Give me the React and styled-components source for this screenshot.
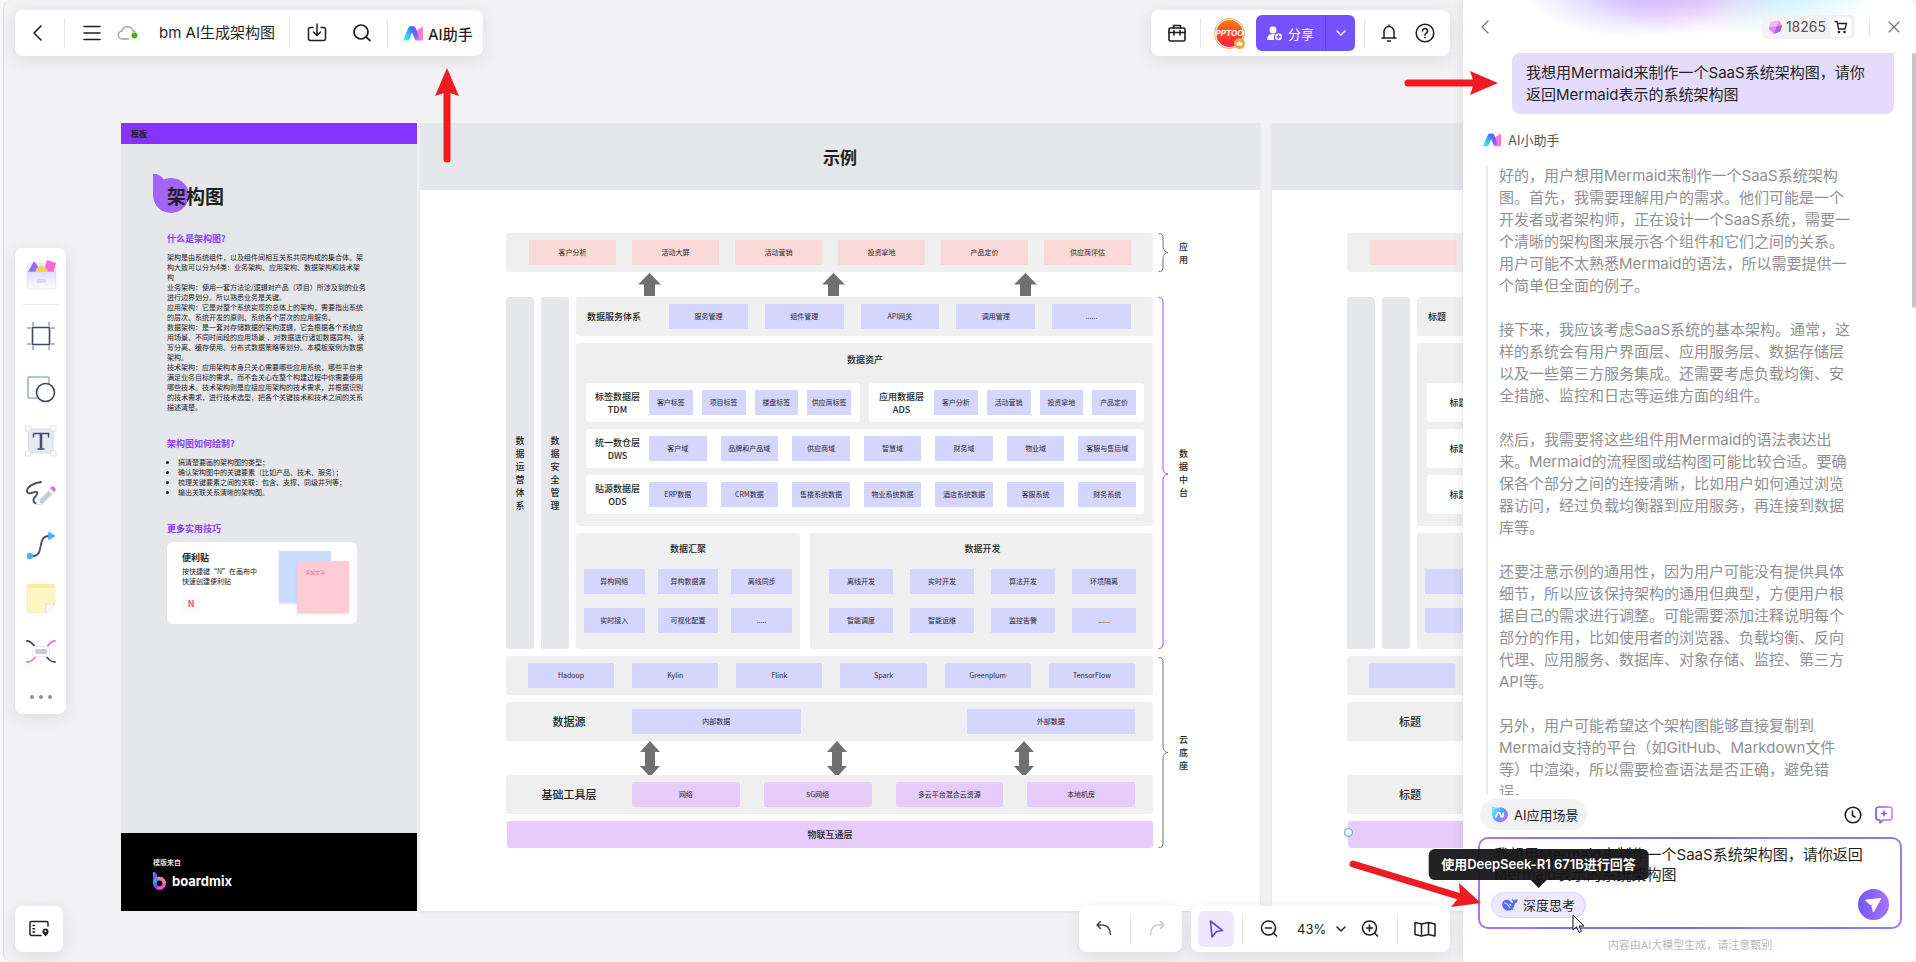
/* eslint-disable react/prop-types */
import { useState } from "react";
import styled, { createGlobalStyle, css } from "styled-components";
import { X } from "lucide-react";

const GlobalStyle = createGlobalStyle`
  * {
    box-sizing: border-box;
  }

  body {
    margin: 0;
    overflow: hidden;
    background: #f8f8f9;
    color: #1f1f21;
    font-family: Inter, "Noto Sans CJK SC", sans-serif;
    font-size: 15px;
  }

  button {
    padding: 0;
    border: none;
    background: none;
    color: inherit;
    font: inherit;
    cursor: pointer;
  }

  button svg {
    display: block;
    flex: none;
  }

  h1, h2, h3, p, ul {
    margin: 0;
    padding: 0;
  }
`;

/* ---------- page ---------- */

const Page = styled.div`
  position: relative;
  display: flex;
  height: 100vh;
  padding-left: 3px;
`;

const Workspace = styled.main`
  position: relative;
  flex: 1;
  min-width: 0;
  overflow: hidden;
  background: #f2f2f5;
  border-left: 1px solid #dededf;
  border-radius: 8px 0 0 8px;
`;

const Frames = styled.div`
  display: flex;
  width: max-content;
  padding: 123px 0 0 117px;
  font-family: "Noto Sans CJK SC", sans-serif;
`;

/* ---------- floating bars ---------- */

const Bar = styled.div`
  position: absolute;
  display: flex;
  align-items: center;
  height: 46px;
  background: #fff;
  border-radius: 8px;
  box-shadow: 0 4px 16px rgba(30, 30, 50, 0.1);
`;

const TopLeft = styled(Bar)`
  top: 10px;
  left: 11px;
  padding: 0 10px;
`;

const TopRight = styled(Bar)`
  top: 10px;
  right: 13px;
  padding: 0 13px 0 16px;
`;

const History = styled(Bar)`
  bottom: 10px;
  right: 281px;
  padding: 0 7px;
  gap: 8px;
`;

const ViewBar = styled(Bar)`
  bottom: 10px;
  right: 13px;
  padding: 0 7px;
`;

const MapBar = styled(Bar)`
  bottom: 10px;
  left: 11px;
  padding: 0 6px;
`;

const Rail = styled.nav`
  position: absolute;
  top: 50%;
  left: 11px;
  transform: translateY(-50%);
  display: flex;
  flex-direction: column;
  align-items: center;
  width: 51px;
  padding-top: 8px;
  background: #fff;
  border-radius: 8px;
  box-shadow: 0 4px 16px rgba(30, 30, 50, 0.1);
`;

const RailButton = styled.button`
  display: flex;
  align-items: center;
  justify-content: center;
  width: 36px;
  height: ${(props) => props.$h || 36}px;
  margin-top: ${(props) => props.$top || 0}px;
`;

const RailLine = styled.div`
  width: 35px;
  height: 1px;
  margin: 12px 0 13px;
  background: #e6e6ea;
`;

const IconButton = styled.button`
  display: flex;
  align-items: center;
  justify-content: center;
  width: ${(props) => props.$w || 36}px;
  height: 36px;
  border-radius: 6px;
  background: ${(props) => (props.$active ? "#ede8fe" : "none")};
`;

const Divider = styled.div`
  flex: none;
  width: 1px;
  height: ${(props) => props.$h || 30}px;
  margin: 0 ${(props) => props.$gap || 0}px;
  background: #e6e6ea;
`;

const FileName = styled.span`
  padding: 0 14px 0 11px;
  line-height: 20px;
  white-space: nowrap;
`;

const AiButton = styled.button`
  display: flex;
  align-items: center;
  gap: 5px;
  padding-left: 7px;
  font-weight: 500;
  white-space: nowrap;
`;

const Avatar = styled.div`
  position: relative;
  display: flex;
  align-items: center;
  justify-content: center;
  width: 31px;
  height: 31px;
  margin-right: 11px;
  border: 1px solid #f7a94a;
  border-radius: 50%;
  background: linear-gradient(#ff7a10, #ff1a4b) content-box;
  padding: 1px;
  color: #fff;
  font-size: 8px;
  font-style: italic;
  font-weight: 700;

  svg {
    position: absolute;
    right: -1px;
    bottom: -1px;
  }
`;

const Share = styled.div`
  display: flex;
  width: 99px;
  height: 36px;
  margin-right: 9px;
  background: #7552ff;
  border-radius: 6px;
  color: #fff;
  font-size: 13px;

  button {
    display: flex;
    align-items: center;
    justify-content: center;
    gap: 6px;
    width: 69px;
  }

  button + button {
    width: 30px;
    border-left: 1px solid #6442f0;
  }
`;

const ZoomValue = styled.button`
  display: flex;
  align-items: center;
  justify-content: space-between;
  width: 49px;
  height: 36px;
  margin: 0 6px 0 10px;
  font-size: 13px;
`;

/* ---------- template frame ---------- */

const Template = styled.section`
  display: flex;
  flex-direction: column;
  width: 296px;
  height: 788px;
  margin-right: 3px;
  background: #e6e7eb;
`;

const TemplateTop = styled.header`
  height: 21px;
  padding-left: 10px;
  background: #8533ff;
  font-size: 8px;
  font-weight: 700;
  line-height: 21px;
`;

const TemplateBody = styled.div`
  flex: 1;
  padding: 30px 0 0 46px;
`;

const TitleRow = styled.div`
  display: grid;
  align-items: center;
  height: 39px;
  margin-left: -14px;

  > * {
    grid-area: 1 / 1;
  }

  h1 {
    padding: 4px 0 0 14px;
    font-size: 19px;
    font-weight: 700;
    line-height: 24px;
  }
`;

const Heading = styled.h2`
  margin: ${(props) => props.$top}px 0 ${(props) => props.$bottom}px;
  color: #8a3ffc;
  font-size: 9px;
  font-weight: 700;
  line-height: 12px;
`;

const Copy = styled.p`
  color: #222;
  font-size: 7px;
  line-height: 10px;
  white-space: pre;
`;

const Bullets = styled.ul`
  padding-left: 11px;
  font-size: 7px;
  line-height: 10px;
`;

const TipCard = styled.div`
  display: flex;
  justify-content: space-between;
  width: 190px;
  height: 82px;
  padding: 9px 8px 0 15px;
  background: #fff;
  border-radius: 6px;

  h3 {
    margin-bottom: 2px;
    font-size: 9px;
    font-weight: 700;
    line-height: 13px;
  }
`;

const KeyCap = styled.span`
  display: block;
  width: 18px;
  height: 18px;
  margin-top: 9px;
  background: #fafafb;
  border-radius: 3px;
  color: #f84f6e;
  font-size: 9px;
  font-weight: 700;
  line-height: 18px;
  text-align: center;
`;

const Notes = styled.div`
  display: grid;
  grid-template-columns: 18px 34px 18px;
  grid-template-rows: 10px 42px 10px;
`;

const Note = styled.div`
  grid-area: ${(props) => props.$area};
  padding: 7px 0 0 8px;
  background: ${(props) => props.$color};
  box-shadow: 0 1px 2px rgba(0, 0, 0, 0.12);
  color: #c9758a;
  font-size: 5px;
  line-height: 8px;
`;

const TemplateFooter = styled.footer`
  height: 78px;
  padding: 23px 0 0 32px;
  background: #000;
  color: #fff;
  font-size: 7px;
  font-weight: 500;
  line-height: 12px;
`;

const Brand = styled.div`
  display: flex;
  align-items: center;
  gap: 6px;
  margin-top: 4px;
  font-family: Inter, sans-serif;
  font-size: 13px;
  font-weight: 700;
  line-height: 18px;
`;

/* ---------- diagram frames ---------- */

const Sheet = styled.section`
  width: 840px;
  height: 788px;
  margin-right: 12px;
  background: #fff;
  box-shadow: 0 1px 2px rgba(0, 0, 0, 0.08);
`;

const SheetTop = styled.header`
  height: 67px;
  background: #e6e7eb;
  font-size: 17px;
  font-weight: 700;
  line-height: 67px;
  text-align: center;
`;

const Diagram = styled.div`
  display: flex;
  flex-direction: column;
  padding: 43px 0 0 ${(props) => props.$left}px;
  font-size: 9px;
  font-weight: 500;
  line-height: 13px;
`;

const Band = styled.div`
  display: grid;
  grid-template-columns: 647px 11px 9px;
  align-items: center;
  column-gap: 5px;
`;

const SideLabel = styled.span`
  width: 9px;
  margin-left: 5px;
  text-align: center;
  word-break: break-all;
`;

const Layer = styled.div`
  display: flex;
  align-items: center;
  height: 39px;
  padding: 0 ${(props) => props.$right || 22}px 0 ${(props) => props.$left || 0}px;
  background: ${(props) => props.$bg || "#efeff0"};
  border-radius: 3px;
`;

const LayerTitle = styled.span`
  flex: none;
  width: ${(props) => props.$w}px;
  padding-left: ${(props) => props.$pad || 0}px;
  font-size: ${(props) => (props.$big ? 11 : 9)}px;
  text-align: ${(props) => (props.$pad ? "left" : "center")};
  white-space: pre-line;
`;

const tones = { pink: "#f9dad8", blue: "#d6d5fe", purple: "#e7cbfa" };

const Cells = styled.div`
  display: grid;
  flex: 1;
  grid-template-columns: repeat(${(props) => props.$cols}, 1fr);
  gap: 14px ${(props) => props.$gap}px;
`;

const Cell = styled.div`
  height: 25px;
  background: ${(props) => tones[props.$tone]};
  border-radius: ${(props) => (props.$tone === "purple" ? 2 : 0)}px;
  color: #26262a;
  font-size: 7px;
  font-weight: 400;
  line-height: 25px;
  text-align: center;
  white-space: nowrap;
`;

const ArrowRow = styled.div`
  display: grid;
  grid-template-columns: ${(props) => props.$cols};
  align-items: center;
  height: ${(props) => props.$h}px;
  padding-left: ${(props) => props.$left}px;
  visibility: ${(props) => (props.$hidden ? "hidden" : "visible")};
`;

const Middle = styled.div`
  display: grid;
  grid-template-columns: 28px 28px 1fr;
  column-gap: 7px;
`;

const Pillar = styled.div`
  display: flex;
  align-items: center;
  padding: 0 9px;
  background: #e6e7eb;
  border-radius: 3px;
  text-align: center;
  word-break: break-all;
`;

const Stack = styled.div`
  display: flex;
  flex-direction: column;
  gap: 7px;
`;

const Group = styled.div`
  padding: ${(props) => props.$pad};
  background: #efeff0;
  border-radius: 3px;
`;

const GroupTitle = styled.div`
  height: 13px;
  margin-bottom: ${(props) => props.$bottom}px;
  text-align: center;
`;

const Split = styled.div`
  display: grid;
  grid-template-columns: ${(props) => props.$cols};
  column-gap: ${(props) => props.$gap}px;
`;

const BaseLayer = styled.div`
  height: 27px;
  margin-left: 1px;
  background: #e7cbfa;
  border-radius: 3px;
  line-height: 27px;
  text-align: center;
`;

const Handle = styled.i`
  position: absolute;
  top: 828px;
  left: 1340px;
  width: 9px;
  height: 9px;
  background: #fff;
  border: 1px solid #35a0ff;
  border-radius: 50%;
`;

/* ---------- AI panel ---------- */

const Panel = styled.aside`
  position: relative;
  z-index: 2;
  display: flex;
  flex-direction: column;
  flex: none;
  width: 453px;
  background:
    radial-gradient(110px 52px at 170px -14px, rgba(150, 130, 255, 0.55), transparent),
    radial-gradient(100px 46px at 225px -10px, rgba(240, 150, 240, 0.5), transparent),
    radial-gradient(110px 46px at 310px -10px, rgba(140, 225, 250, 0.5), transparent),
    #fff;
  border-radius: 0 8px 8px 0;
  box-shadow: -2px 0 10px rgba(30, 30, 50, 0.08);
`;

const PanelTop = styled.header`
  display: flex;
  align-items: center;
  height: 53px;
  padding: 0 12px 0 13px;
  color: #6d6d72;

  > button:first-child {
    margin-right: auto;
  }
`;

const Points = styled.div`
  display: flex;
  align-items: center;
  gap: 3px;
  height: 24px;
  padding: 0 4px 0 5px;
  background: #f2f2f5;
  border-radius: 5px;
  color: #555559;
  font-size: 14px;

  button {
    display: flex;
    align-items: center;
    justify-content: center;
    width: 20px;
    height: 20px;
    margin-left: 2px;
    background: #fff;
    border-radius: 4px;
    color: #1f1f21;
  }
`;

const Chat = styled.div`
  position: relative;
  flex: 1;
  min-height: 0;
  overflow: hidden;
  padding: 0 22px 0 20px;
  line-height: 22px;
`;

const Thumb = styled.div`
  position: absolute;
  top: 0;
  right: 0;
  width: 4px;
  height: 255px;
  background: #c6c6ca;
  border-radius: 2px;
`;

const Question = styled.p`
  width: 382px;
  margin-left: auto;
  padding: 9px 14px 8px;
  background: #e4dbfd;
  border-radius: 8px 0 8px 8px;
  white-space: pre-line;
`;

const Speaker = styled.div`
  display: flex;
  align-items: center;
  gap: 7px;
  height: 18px;
  margin: 17px 0 16px;
  color: #555559;
  font-size: 13px;
`;

const Thinking = styled.div`
  display: flex;
  flex-direction: column;
  gap: 22px;
  margin-left: 3px;
  padding-left: 11px;
  border-left: 2px solid #e8e8ea;
  color: #8f8f94;
  white-space: pre-line;
`;

const PanelBottom = styled.div`
  padding: 4px 14px 9px 15px;
`;

const Tools = styled.div`
  display: flex;
  align-items: center;
  gap: 13px;
  padding: 0 9px 0 2px;
  margin-bottom: 7px;

  > svg {
    flex: none;
  }
`;

const Scenes = styled.button`
  display: flex;
  align-items: center;
  gap: 6px;
  height: 31px;
  margin-right: auto;
  padding: 0 9px 0 11px;
  background: #f2f2f5;
  border-radius: 16px;
  font-size: 13px;
`;

const Composer = styled.div`
  padding: 6px 11px 7px;
  border: 2px solid transparent;
  border-radius: 10px;
  background:
    linear-gradient(#fff, #fff) padding-box,
    linear-gradient(100deg, #a777ee, #8a6cf0 30%, #6f6fe8 50%, #9a78f5 70%, #6c82ea 84%, #a777ee) border-box;
`;

const Prompt = styled.textarea`
  display: block;
  width: 100%;
  height: 40px;
  margin-bottom: 4px;
  padding: 0 3px;
  border: none;
  outline: none;
  overflow: hidden;
  resize: none;
  background: none;
  color: inherit;
  font: inherit;
  line-height: 20px;
`;

const Actions = styled.div`
  display: flex;
  align-items: center;
  justify-content: space-between;
  height: 31px;
`;

const DeepWrap = styled.div`
  position: relative;
`;

const DeepThink = styled.button`
  display: flex;
  align-items: center;
  gap: 5px;
  height: 26px;
  padding: 0 10px;
  background: #ede8fe;
  border: 1px solid #dcd3f5;
  border-radius: 13px;
  font-size: 13px;
`;

const Tooltip = styled.div`
  position: absolute;
  bottom: 38px;
  left: 50%;
  transform: translateX(-50%);
  height: 31px;
  padding: 0 13px;
  background: rgba(22, 22, 25, 0.95);
  border-radius: 6px;
  color: #fff;
  font-size: 13px;
  font-weight: 600;
  line-height: 31px;
  white-space: nowrap;

  &::after {
    content: "";
    position: absolute;
    top: 31px;
    left: 50%;
    margin-left: -8px;
    border: 8px solid transparent;
    border-top-color: #1b1b1e;
    border-bottom: none;
  }
`;

const Footnote = styled.p`
  margin-top: 8px;
  color: #b9b9bd;
  font-size: 11px;
  line-height: 16px;
  text-align: center;
`;

/* ---------- pointers drawn over the page ---------- */

const overlay = css`
  position: absolute;
  z-index: 3;
  pointer-events: none;
`;

const ArrowUp = styled.svg`
  ${overlay}
  top: 68px;
  left: 435px;
`;

const ArrowRight = styled.svg`
  ${overlay}
  top: 71px;
  right: 418px;
`;

const ArrowDown = styled.svg`
  ${overlay}
  right: 434px;
  bottom: 52px;
`;

const Mouse = styled.svg`
  ${overlay}
  right: 331px;
  bottom: 28px;
`;

/* ---------- icons ---------- */

function Svg({ size = 20, w, h, sw = 1.6, color = "#1f1f21", children }) {
  return (
    <svg
      width={w || size}
      height={h || size}
      viewBox={`0 0 ${w || size} ${h || size}`}
      fill="none"
      stroke={color}
      strokeWidth={sw}
      strokeLinecap="round"
      strokeLinejoin="round"
      aria-hidden="true"
    >
      {children}
    </svg>
  );
}

function AiLogo({ id, w = 20, h = 15 }) {
  return (
    <svg width={w} height={h} viewBox="0 0 20 15" aria-hidden="true">
      <defs>
        <linearGradient id={`${id}a`} x1="0" y1="1" x2="0.7" y2="0">
          <stop offset="0.1" stopColor="#37f5dc" />
          <stop offset="0.6" stopColor="#34b0ff" />
          <stop offset="1" stopColor="#3f6bff" />
        </linearGradient>
        <linearGradient id={`${id}b`} x1="0" y1="0" x2="1" y2="1">
          <stop offset="0" stopColor="#3c6dff" />
          <stop offset="0.6" stopColor="#8a55ff" />
          <stop offset="1" stopColor="#c79bff" />
        </linearGradient>
      </defs>
      <path d="M20 0.5 12.5 5 16 14.5h4z" fill="#ff7ccb" />
      <path d="M6.5 0.5H12L17.5 14.5H12.5z" fill={`url(#${id}b)`} />
      <path d="M0 14.5 5.2 2.2C5.7 1 6.6 0.5 7.6 0.5H11L7.2 11.5C6.5 13.6 5.6 14.5 3.8 14.5z" fill={`url(#${id}a)`} />
    </svg>
  );
}

function Chevron() {
  return (
    <Svg w={10} h={10} color="currentColor" sw={1.5}>
      <path d="M1 3l4 4 4-4" />
    </Svg>
  );
}

function UpArrow() {
  return (
    <svg width="23" height="23" viewBox="0 0 23 23" aria-hidden="true">
      <path d="M11.5 0 23 11.5H17V23H6V11.5H0z" fill="#6f7072" />
    </svg>
  );
}

function TwoWayArrow() {
  return (
    <svg width="20" height="36" viewBox="0 0 20 36" aria-hidden="true">
      <path d="M10 0 20 11H15V25H20L10 36 0 25H5V11H0z" fill="#6f7072" />
    </svg>
  );
}

function Brace({ h, mid = h / 2, color = "#6f7072" }) {
  return (
    <Svg w={11} h={h} color={color} sw={1}>
      <path
        d={`M1 .5C4 .5 5 2 5 5V${mid - 6}C5 ${mid - 3} 7 ${mid} 10 ${mid}C7 ${mid} 5 ${mid + 3} 5 ${mid + 6}V${h - 5}C5 ${h - 2} 4 ${h - 0.5} 1 ${h - 0.5}`}
      />
    </Svg>
  );
}

/* ---------- content ---------- */

const intro = `架构是由系统组件，以及组件间相互关系共同构成的集合体。架
构大致可以分为4类：业务架构、应用架构、数据架构和技术架
构
业务架构：使用一套方法论/逻辑对产品（项目）所涉及到的业务
进行边界划分。所以熟悉业务是关键。
应用架构：它是对整个系统实现的总体上的架构，需要指出系统
的层次、系统开发的原则、系统各个层次的应用服务。
数据架构：是一套对存储数据的架构逻辑，它会根据各个系统应
用场景、不同时间段的应用场景 ，对数据进行诸如数据异构、读
写分离、缓存使用、分布式数据策略等划分。本模板案例为数据
架构。
技术架构：应用架构本身只关心需要哪些应用系统，哪些平台来
满足业务目标的需求，而不会关心在整个构建过程中你需要使用
哪些技术。技术架构则是应接应用架构的技术需求，并根据识别
的技术需求，进行技术选型，把各个关键技术和技术之间的关系
描述清楚。`;

const steps = [
  "搞清楚要画的架构图的类型；",
  "确认架构图中的关键要素（比如产品、技术、服务）；",
  "梳理关键要素之间的关联：包含、支撑、同级并列等；",
  "输出关联关系清晰的架构图。",
];

const thoughts = [
  `好的，用户想用Mermaid来制作一个SaaS系统架构
图。首先，我需要理解用户的需求。他们可能是一个
开发者或者架构师，正在设计一个SaaS系统，需要一
个清晰的架构图来展示各个组件和它们之间的关系。
用户可能不太熟悉Mermaid的语法，所以需要提供一
个简单但全面的例子。`,
  `接下来，我应该考虑SaaS系统的基本架构。通常，这
样的系统会有用户界面层、应用服务层、数据存储层
以及一些第三方服务集成。还需要考虑负载均衡、安
全措施、监控和日志等运维方面的组件。`,
  `然后，我需要将这些组件用Mermaid的语法表达出
来。Mermaid的流程图或结构图可能比较合适。要确
保各个部分之间的连接清晰，比如用户如何通过浏览
器访问，经过负载均衡器到应用服务，再连接到数据
库等。`,
  `还要注意示例的通用性，因为用户可能没有提供具体
细节，所以应该保持架构的通用但典型，方便用户根
据自己的需求进行调整。可能需要添加注释说明每个
部分的作用，比如使用者的浏览器、负载均衡、反向
代理、应用服务、数据库、对象存储、监控、第三方
API等。`,
  `另外，用户可能希望这个架构图能够直接复制到
Mermaid支持的平台（如GitHub、Markdown文件
等）中渲染，所以需要检查语法是否正确，避免错
误。`,
];

/* ---------- frames ---------- */

function TemplateFrame() {
  return (
    <Template>
      <TemplateTop>模板</TemplateTop>
      <TemplateBody>
        <TitleRow>
          <svg width="36" height="39" viewBox="0 0 36 39" aria-hidden="true">
            <path d="M0 0C5 0 9 2 10.500 5.500A18 17.500 0 1 1 0 21z" fill="#a264f5" />
          </svg>
          <h1>架构图</h1>
        </TitleRow>
        <Heading $top={20} $bottom={7}>什么是架构图?</Heading>
        <Copy>{intro}</Copy>
        <Heading $top={26} $bottom={7}>架构图如何绘制?</Heading>
        <Bullets>
          {steps.map((step) => (
            <li key={step}>{step}</li>
          ))}
        </Bullets>
        <Heading $top={26} $bottom={7}>更多实用技巧</Heading>
        <TipCard>
          <div>
            <h3>便利贴</h3>
            <Copy>{"按快捷键“N”在画布中\n快速创建便利贴"}</Copy>
            <KeyCap>N</KeyCap>
          </div>
          <Notes>
            <Note $area="1 / 1 / 3 / 3" $color="#cbdcff" />
            <Note $area="2 / 2 / 4 / 4" $color="#ffcbd5">添加文字</Note>
          </Notes>
        </TipCard>
      </TemplateBody>
      <TemplateFooter>
        模版来自
        <Brand>
          <svg width="13" height="18" viewBox="0 0 13 18" fill="none" aria-hidden="true">
            <defs>
              <linearGradient id="brand" x1="0" y1="0" x2="1" y2="1">
                <stop offset="0.1" stopColor="#1fb4ff" />
                <stop offset="0.45" stopColor="#6a45ff" />
                <stop offset="0.75" stopColor="#ff4fc8" />
              </linearGradient>
            </defs>
            <path d="M0 0C2.500 0 4 1.500 4 3.500V11.500H0z" fill="url(#brand)" />
            <circle cx="6.500" cy="11.300" r="4.700" stroke="url(#brand)" strokeWidth="3.600" />
            <path d="M5 6.700A4.700 4.700 0 0 1 11.200 11" stroke="#ff7d8e" strokeWidth="3.400" />
          </svg>
          boardmix
        </Brand>
      </TemplateFooter>
    </Template>
  );
}

function CellRow({ items, tone = "blue", gap, cols, blank }) {
  return (
    <Cells $cols={cols || items.length} $gap={gap}>
      {items.map((item) => (
        <Cell key={item} $tone={tone}>
          {!blank && item}
        </Cell>
      ))}
    </Cells>
  );
}

function DiagramFrame({ blank }) {
  const t = (text) => (blank ? "标题" : text);
  const own = (text) => (blank ? "" : text);

  return (
    <Sheet>
      <SheetTop>{own("示例")}</SheetTop>
      <Diagram $left={blank ? 75 : 86}>
        <Band>
          <Layer $left={23}>
            <CellRow
              blank={blank}
              tone="pink"
              gap={16}
              items={["客户分析", "活动大屏", "活动营销", "投资拿地", "产品定价", "供应商评估"]}
            />
          </Layer>
          <Brace h={39} />
          <SideLabel>{own("应用")}</SideLabel>
        </Band>

        <ArrowRow $h={25} $left={132} $hidden={blank} $cols="184px 192px 23px">
          <UpArrow />
          <UpArrow />
          <UpArrow />
        </ArrowRow>

        <Band>
          <Middle>
            <Pillar>{own("数据运营体系")}</Pillar>
            <Pillar>{own("数据安全管理")}</Pillar>
            <Stack>
              <Layer>
                <LayerTitle $w={93} $pad={11}>{t("数据服务体系")}</LayerTitle>
                <CellRow blank={blank} gap={17} items={["服务管理", "组件管理", "API网关", "调用管理", "......"]} />
              </Layer>
              <Group $pad="10px 9px 12px 10px">
                <GroupTitle $bottom={17}>{own("数据资产")}</GroupTitle>
                <Stack>
                  <Split $cols="274px 1fr" $gap={9}>
                    <Layer $bg="#fff" $right={9}>
                      <LayerTitle $w={63}>{t("标签数据层\nTDM")}</LayerTitle>
                      <CellRow blank={blank} gap={9} items={["客户标签", "项目标签", "楼盘标签", "供应商标签"]} />
                    </Layer>
                    <Layer $bg="#fff" $right={8}>
                      <LayerTitle $w={65}>{own("应用数据层\nADS")}</LayerTitle>
                      <CellRow blank={blank} gap={9} items={["客户分析", "活动营销", "投资拿地", "产品定价"]} />
                    </Layer>
                  </Split>
                  <Layer $bg="#fff" $right={8}>
                    <LayerTitle $w={63}>{t("统一数仓层\nDWS")}</LayerTitle>
                    <CellRow
                      blank={blank}
                      gap={14}
                      items={["客户域", "品牌和产品域", "供应商域", "智慧域", "财务域", "物业域", "客服与售后域"]}
                    />
                  </Layer>
                  <Layer $bg="#fff" $right={8}>
                    <LayerTitle $w={63}>{t("贴源数据层\nODS")}</LayerTitle>
                    <CellRow
                      blank={blank}
                      gap={14}
                      items={["ERP数据", "CRM数据", "售楼系统数据", "物业系统数据", "酒店系统数据", "客服系统", "财务系统"]}
                    />
                  </Layer>
                </Stack>
              </Group>
              <Split $cols="224px 1fr" $gap={10}>
                <Group $pad="9px 8px 16px">
                  <GroupTitle $bottom={14}>{own("数据汇聚")}</GroupTitle>
                  <CellRow
                    blank={blank}
                    cols={3}
                    gap={13}
                    items={["异构网络", "异构数据源", "离线同步", "实时接入", "可视化配置", "....."]}
                  />
                </Group>
                <Group $pad="9px 17px 16px 19px">
                  <GroupTitle $bottom={14}>{own("数据开发")}</GroupTitle>
                  <CellRow
                    blank={blank}
                    cols={4}
                    gap={17}
                    items={["离线开发", "实时开发", "算法开发", "环境隔离", "智能调度", "智能运维", "监控告警", "......"]}
                  />
                </Group>
              </Split>
            </Stack>
          </Middle>
          <Brace h={352} mid={177} color="#a24bf5" />
          <SideLabel>{own("数据中台")}</SideLabel>
        </Band>

        <ArrowRow $h={7} />

        <Band>
          <div>
            <Stack>
              <Layer $left={22} $right={18}>
                <CellRow
                  blank={blank}
                  gap={18}
                  items={["Hadoop", "Kylin", "Flink", "Spark", "Greenplum", "TensorFlow"]}
                />
              </Layer>
              <Layer $right={18}>
                <LayerTitle $big $w={126}>{t("数据源")}</LayerTitle>
                <CellRow blank={blank} gap={166} items={["内部数据", "外部数据"]} />
              </Layer>
            </Stack>
            <ArrowRow $h={34} $left={134} $hidden={blank} $cols="187px 187px 20px">
              <TwoWayArrow />
              <TwoWayArrow />
              <TwoWayArrow />
            </ArrowRow>
            <Stack>
              <Layer $right={18}>
                <LayerTitle $big $w={126}>{t("基础工具层")}</LayerTitle>
                <CellRow
                  blank={blank}
                  tone="purple"
                  gap={24}
                  items={["网络", "5G网络", "多云平台混合云资源", "本地机房"]}
                />
              </Layer>
              <BaseLayer>{own("物联互通层")}</BaseLayer>
            </Stack>
          </div>
          <Brace h={191} />
          <SideLabel>{own("云底座")}</SideLabel>
        </Band>
      </Diagram>
    </Sheet>
  );
}

/* ---------- bars ---------- */

function TopBars() {
  return (
    <>
      <TopLeft>
        <IconButton $w={26} aria-label="返回">
          <Svg color="#1f1f21">
            <path d="M13 3 6 10l7 7" />
          </Svg>
        </IconButton>
        <Divider $gap={13} />
        <IconButton $w={28} aria-label="菜单">
          <Svg w={18} h={18}>
            <path d="M1 2.500h16M1 9h16M1 15.500h16" />
          </Svg>
        </IconButton>
        <IconButton $w={42} aria-label="已保存到云端">
          <Svg w={22} h={20} color="#a3a3a8" sw={1.4}>
            <path d="M12.500 16H6.500A4 4 0 0 1 6 8a5.500 5.500 0 0 1 10.600-.500c1 .200 1.800.700 2.400 1.400" />
            <circle cx="18.500" cy="12.500" r="3" fill="#3cb015" stroke="none" />
          </Svg>
        </IconButton>
        <FileName>bm AI生成架构图</FileName>
        <Divider />
        <IconButton $w={55} aria-label="导出">
          <Svg sw={1.5}>
            <path d="M6 4.500H3.500a2 2 0 0 0-2 2v9a2 2 0 0 0 2 2h13a2 2 0 0 0 2-2v-9a2 2 0 0 0-2-2H14M10 1v11M6.500 9l3.500 3.500L13.500 9" />
          </Svg>
        </IconButton>
        <IconButton $w={34} aria-label="搜索">
          <Svg sw={1.7}>
            <circle cx="9" cy="9" r="7" />
            <path d="m14 14 4 3.500" />
          </Svg>
        </IconButton>
        <Divider $gap={8} />
        <AiButton>
          <AiLogo id="top" />
          AI助手
        </AiButton>
      </TopLeft>

      <TopRight>
        <IconButton $w={20} aria-label="工具箱">
          <Svg>
            <path d="M6.500 5V2.500h7V5M2 9.500h16M7 7.500V12M13 7.500V12" />
            <rect x="2" y="5" width="16" height="13" rx="1.500" />
          </Svg>
        </IconButton>
        <Divider $gap={13} />
        <Avatar>
          PPTOO
          <svg width="11" height="11" viewBox="0 0 11 11" aria-hidden="true">
            <circle cx="5.500" cy="5.500" r="5.500" fill="#f5a93c" />
            <path d="m2.500 4 1.500 1L5.500 3 7 5l1.500-1L8 7.500H3z" fill="#fff" />
          </svg>
        </Avatar>
        <Share>
          <button type="button">
            <Svg w={15} h={15} color="none">
              <circle cx="6" cy="4" r="3.500" fill="#fff" />
              <path d="M0 14c0-4 2-6 6-6 .900 0 1.500.100 2 .300A5 5 0 0 0 7.500 14z" fill="#fff" />
              <circle cx="11.500" cy="10.800" r="3.500" fill="#fff" />
              <path d="M11.500 9v3.600M9.700 10.800h3.600" stroke="#7552ff" strokeWidth="1.200" />
            </Svg>
            分享
          </button>
          <button type="button" aria-label="分享选项">
            <Chevron />
          </button>
        </Share>
        <Divider />
        <IconButton $w={48} aria-label="通知">
          <Svg sw={1.5}>
            <path d="M3 15h14M5 15V8.500a5 5 0 0 1 10 0V15M8.500 18h3M10 2v1" />
          </Svg>
        </IconButton>
        <IconButton $w={24} aria-label="帮助">
          <Svg>
            <circle cx="10" cy="10" r="8.800" />
            <path d="M7.500 8a2.500 2.500 0 1 1 3.800 2.100c-.900.600-1.300 1-1.300 2M10 14.500v.200" />
          </Svg>
        </IconButton>
      </TopRight>
    </>
  );
}

function ToolRail() {
  return (
    <Rail aria-label="工具">
      <RailButton aria-label="素材库">
        <svg width="32" height="34" viewBox="0 0 32 34" aria-hidden="true">
          <defs>
            <linearGradient id="box" x1="0" y1="0" x2="0" y2="1">
              <stop offset="0" stopColor="#e3dcff" />
              <stop offset="1" stopColor="#fcfbff" />
            </linearGradient>
          </defs>
          <rect x="2" y="6" width="29" height="26" rx="2" fill="#efebff" />
          <path d="m3 15 6-11 8 11z" fill="#8d70f5" />
          <path d="m22 3 9 3-3 11-9-3z" fill="#ff69d7" />
          <circle cx="16.500" cy="15.500" r="6.500" fill="#ffce55" />
          <path d="M2 15h29v15a2 2 0 0 1-2 2H4a2 2 0 0 1-2-2z" fill="url(#box)" stroke="#ddd8ec" strokeWidth=".6" />
          <rect x="12" y="22" width="9" height="4" fill="#ddd4fb" />
        </svg>
      </RailButton>
      <RailLine />
      <RailButton aria-label="画框">
        <Svg size={30} color="#9aa5b8" sw={1.6}>
          <path d="M7 1.500v3M7 25.500v3M23 1.500v3M23 25.500v3M1.500 7h3M1.500 23h3M25.500 7h3M25.500 23h3" />
          <rect x="6.500" y="6.500" width="17" height="17" stroke="#3f4562" fill="#fff" />
        </Svg>
      </RailButton>
      <RailButton $top={17} aria-label="图形">
        <Svg size={30} color="#9fb0c4" sw={1.6}>
          <rect x="2" y="3" width="21" height="21" rx="1" />
          <circle cx="19.500" cy="18.500" r="9" stroke="#3f4562" fill="#fff" />
        </Svg>
      </RailButton>
      <RailButton $top={16} aria-label="文本">
        <Svg size={32} color="#474d68" sw={1}>
          <rect x="4" y="4" width="24" height="24" fill="#e6eaf3" stroke="#d4d8e2" />
          <path d="M1 1h5v5H1zM26 1h5v5h-5zM1 26h5v5H1zM26 26h5v5h-5z" fill="#fff" stroke="#dcdfe6" />
          <path d="M8.500 8.500h15v4M8.500 8.500v4M12.500 24h7" strokeWidth="1.500" strokeLinejoin="miter" strokeLinecap="butt" />
          <path d="M14.700 8h2.600v16h-2.600z" fill="#474d68" stroke="none" />
        </Svg>
      </RailButton>
      <RailButton $top={16} aria-label="画笔">
        <Svg size={32} color="#474d68" sw={1.8}>
          <path d="M16 5C8 6 2 10 2 14s5 2 8 1c4-1 2 3 0 5s-3 6 3 7" />
          <path d="m13 24 14-14 4 4-14 13-6 1z" fill="#fff" stroke="#dcdee6" strokeWidth="1" />
          <path d="M15 23 24 14l3 3-9 9h-3z" fill="#c5c9da" stroke="none" />
          <path d="m25 11 3-2 3 3-2 3z" fill="#d76fee" stroke="none" />
        </Svg>
      </RailButton>
      <RailButton $top={17} aria-label="连接线">
        <Svg size={32} color="#474d68" sw={1.8}>
          <path d="M4 26h4c12 0 3-20 16-20h3" />
          <circle cx="5" cy="26" r="3.200" fill="#53adff" stroke="none" />
          <path d="M24 2.500 30 6l-6 3.500z" fill="#53adff" stroke="#53adff" strokeWidth="1" />
        </Svg>
      </RailButton>
      <RailButton $top={17} aria-label="便利贴">
        <svg width="30" height="32" viewBox="0 0 30 32" aria-hidden="true">
          <path d="M1 1h28v20l-9 9H1z" fill="#fdf6c2" stroke="#eee6b4" strokeWidth=".5" />
          <path d="M1 1h28v4H1z" fill="#f7eda6" />
          <path d="M20 30v-9h9z" fill="#fff" stroke="#dedbcc" strokeWidth=".8" />
        </svg>
      </RailButton>
      <RailButton $top={17} aria-label="思维导图">
        <Svg size={30} color="#474d68" sw={1.8}>
          <path d="M1 4c6 0 7 7 14 11s7 10 14 10" />
          <path d="M29 4c-6 0-7 7-14 11S8 25 1 25" stroke="#d07cf2" />
          <rect x="6.500" y="9.500" width="17" height="10" rx="2" fill="#fff" stroke="#e8e8ee" strokeWidth="1" />
          <rect x="9" y="12" width="12" height="5" rx="1" fill="#c5c9da" stroke="none" />
        </Svg>
      </RailButton>
      <RailButton $top={10} $h={34} aria-label="更多">
        <Svg w={24} h={6} color="none">
          <circle cx="3" cy="3" r="2" fill="#8f8f94" />
          <circle cx="12" cy="3" r="2" fill="#8f8f94" />
          <circle cx="21" cy="3" r="2" fill="#8f8f94" />
        </Svg>
      </RailButton>
    </Rail>
  );
}

function BottomBars() {
  return (
    <>
      <MapBar>
        <IconButton aria-label="导航图">
          <Svg w={22} h={18} sw={1.5}>
            <path d="M20 6V3a1.500 1.500 0 0 0-1.500-1.500h-15A1.500 1.500 0 0 0 2 3v11a1.500 1.500 0 0 0 1.500 1.500H13M5 5.500h1.500M5 8.800h1.500M5 12h1.500" />
            <path d="M17.500 16.500c-2-2-3-3.300-3-5a3 3 0 0 1 6 0c0 1.700-1 3-3 5z" fill="#1f1f21" stroke="none" />
            <circle cx="17.500" cy="11.300" r="1" fill="#fff" stroke="none" />
          </Svg>
        </IconButton>
      </MapBar>

      <History>
        <IconButton aria-label="撤销">
          <Svg sw={1.5} color="#444448">
            <path d="M6.500 2.500 3 6l3.500 3.500M3 6h5c5 0 8 3 8.500 9.500" />
          </Svg>
        </IconButton>
        <Divider />
        <IconButton aria-label="重做">
          <Svg sw={1.5} color="#c9c9cd">
            <path d="M13.500 2.500 17 6l-3.500 3.500M17 6h-5C7 6 4 9 3.500 15.500" />
          </Svg>
        </IconButton>
      </History>

      <ViewBar>
        <IconButton $active aria-label="选择">
          <Svg size={18} color="#6443e0">
            <path d="M3.500 1 15.500 10.500 9.500 11.500 5 17z" />
          </Svg>
        </IconButton>
        <Divider $gap={8} />
        <IconButton aria-label="缩小">
          <Svg>
            <circle cx="9.500" cy="9" r="7" />
            <path d="m14.500 14 3 3M6.500 9h6" />
          </Svg>
        </IconButton>
        <ZoomValue aria-label="缩放比例">
          43%
          <Chevron />
        </ZoomValue>
        <IconButton aria-label="放大">
          <Svg>
            <circle cx="9.500" cy="9" r="7" />
            <path d="m14.500 14 3 3M6.500 9h6M9.500 6v6" />
          </Svg>
        </IconButton>
        <Divider $gap={9} />
        <IconButton aria-label="演示">
          <Svg w={22} h={18} sw={1.5}>
            <path d="M1 2.500 7.500 4v12L1 14.500zM7.500 4l7-1.500v12l-7 1.500M14.500 2.500 21 4v12l-6.500-1.500" />
          </Svg>
        </IconButton>
      </ViewBar>
    </>
  );
}

/* ---------- AI panel ---------- */

function AiPanel() {
  const [prompt, setPrompt] = useState("我想用Mermaid来制作一个SaaS系统架构图，请你返回Mermaid表示的系统架构图");

  function change(e) {
    setPrompt(e.target.value);
  }

  function caretToEnd(e) {
    e.target.setSelectionRange(prompt.length, prompt.length);
  }

  return (
    <Panel>
      <PanelTop>
        <button type="button" aria-label="返回">
          <Svg w={18} h={18} sw={1.3} color="#77777c">
            <path d="m12 3-6 6 6 6" />
          </Svg>
        </button>
        <Points>
          <svg width="16" height="16" viewBox="0 0 16 16" aria-hidden="true">
            <path d="M4 3.500 12 1.500l3 5-2 6-6 2.500L1.500 10z" fill="#e38af2" />
            <path d="M4 3.500 12 1.500 10 7 3 8z" fill="#f6b9f5" />
            <path d="m10 7 5-.500-2 6-6 2.500z" fill="#b45be6" />
          </svg>
          18265
          <button type="button" aria-label="购买">
            <Svg size={14} sw={1.3}>
              <path d="M1 1.500h2L4.500 9h6.500l1.500-5.500h-9" />
              <circle cx="5" cy="12" r=".700" />
              <circle cx="10.500" cy="12" r=".700" />
            </Svg>
          </button>
        </Points>
        <Divider $h={18} $gap={14} />
        <button type="button" aria-label="关闭">
          <X size={20} strokeWidth={1.3} />
        </button>
      </PanelTop>

      <Chat>
        <Question>{"我想用Mermaid来制作一个SaaS系统架构图，请你\n返回Mermaid表示的系统架构图"}</Question>
        <Speaker>
          <AiLogo id="chat" w={18} h={14} />
          AI小助手
        </Speaker>
        <Thinking>
          {thoughts.map((text) => (
            <p key={text}>{text}</p>
          ))}
        </Thinking>
        <Thumb />
      </Chat>

      <PanelBottom>
        <Tools>
          <Scenes type="button">
            <svg width="17" height="17" viewBox="0 0 17 17" aria-hidden="true">
              <defs>
                <linearGradient id="scene" x1="0" y1="0.200" x2="1" y2="0.800">
                  <stop offset="0" stopColor="#6ff0ee" />
                  <stop offset="0.500" stopColor="#5b9bff" />
                  <stop offset="1" stopColor="#c468ff" />
                </linearGradient>
              </defs>
              <path d="M1 .500C3 .500 4 1.500 6 1.800A8 7.500 0 1 1 1 9z" fill="url(#scene)" />
              <path d="m4.500 11.500 2.500-5h1.500l2 5M12.500 6.500l-1 5" stroke="#fff" strokeWidth="1.500" fill="none" />
            </svg>
            AI应用场景
          </Scenes>
          <Svg size={18}>
            <circle cx="9" cy="9" r="7.800" />
            <path d="M8.500 5v4.500l2.500 1.500" />
          </Svg>
          <svg width="18" height="18" viewBox="0 0 18 18" fill="none" strokeWidth="1.600" strokeLinejoin="round" aria-hidden="true">
            <defs>
              <linearGradient id="plus" x1="0" y1="0" x2="1" y2="0">
                <stop offset="0" stopColor="#6a50f5" />
                <stop offset="1" stopColor="#d47bf5" />
              </linearGradient>
            </defs>
            <path d="M3.500 1h11a2.500 2.500 0 0 1 2.500 2.500v8a2.500 2.500 0 0 1-2.500 2.500H8l-3 3v-3H3.500A2.500 2.500 0 0 1 1 11.500v-8A2.500 2.500 0 0 1 3.500 1z" stroke="url(#plus)" />
            <path d="M9 4.500v6M6 7.500h6" stroke="#8656f5" />
          </svg>
        </Tools>

        <Composer>
          <Prompt aria-label="提问" value={prompt} onChange={change} onFocus={caretToEnd} autoFocus spellCheck={false} />
          <Actions>
            <DeepWrap>
              <DeepThink type="button">
                <svg width="16" height="13" viewBox="0 0 16 13" aria-hidden="true">
                  <path
                    d="M15.800 1.300c-.800.500-1.200.200-1.900-.300-.300 1-.900 1.300-1.900 1.200C10.800 2 10.400 1.200 10 .500c-.200 1.500.200 2.600 1.200 3.300-.200.900-.700 1.300-1.300 1.200C8.500 4.500 7.500 2 5.500 1.800 2.500 1.500.200 3.300.200 6.500c0 3.500 2.800 6 6 6 1.500 0 2.500-.400 3.300-1l1.700.500c.200-.500-.200-.900-.600-1.400 1.600-1.400 2-3.300 2.400-5.500 1.500-.300 2.500-1.500 2.800-3.800z"
                    fill="#4a6bfd"
                  />
                  <path d="M2 5c2.500 0 4.500 2 6 5M7.300 6.300c1 0 1.700.700 1.700 1.700" stroke="#ede8fe" strokeWidth="1.100" fill="none" />
                </svg>
                深度思考
              </DeepThink>
              <Tooltip role="tooltip">使用DeepSeek-R1 671B进行回答</Tooltip>
            </DeepWrap>
            <button type="button" aria-label="发送">
              <svg width="31" height="31" viewBox="0 0 31 31" aria-hidden="true">
                <defs>
                  <linearGradient id="send" x1="0" y1="0" x2="1" y2="0">
                    <stop offset="0" stopColor="#7457fa" />
                    <stop offset="1" stopColor="#a673f7" />
                  </linearGradient>
                </defs>
                <circle cx="15.500" cy="15.500" r="15.500" fill="url(#send)" />
                <path d="M7.500 11.300 22.800 9.500 15.500 23l-1.700-6.500 4.500-3.300-5.700 2.500z" fill="#fff" stroke="#fff" strokeLinejoin="round" />
              </svg>
            </button>
          </Actions>
        </Composer>
        <Footnote>内容由AI大模型生成，请注意甄别</Footnote>
      </PanelBottom>
    </Panel>
  );
}

function App() {
  return (
    <>
      <GlobalStyle />
      <Page>
        <Workspace>
          <Frames>
            <TemplateFrame />
            <DiagramFrame />
            <DiagramFrame blank />
          </Frames>
          <Handle />
          <TopBars />
          <ToolRail />
          <BottomBars />
        </Workspace>
        <AiPanel />

        <ArrowUp width="24" height="95" viewBox="0 0 24 95">
          <path d="M12 20V91" stroke="#ed1c24" strokeWidth="7" strokeLinecap="round" />
          <path d="m12 0 12 28-12-4-12 4z" fill="#ed1c24" />
        </ArrowUp>
        <ArrowRight width="94" height="24" viewBox="0 0 94 24">
          <path d="M4 12H74" stroke="#ed1c24" strokeWidth="7" strokeLinecap="round" />
          <path d="M94 12 66 0l4 12-4 12z" fill="#ed1c24" />
        </ArrowRight>
        <ArrowDown width="134" height="52" viewBox="0 0 134 52">
          <path d="M5 6 110 38" stroke="#ed1c24" strokeWidth="7" strokeLinecap="round" />
          <path d="M133 45 111 25l1 13-9 11z" fill="#ed1c24" />
        </ArrowDown>
        <Mouse width="13" height="20" viewBox="0 0 13 20">
          <path d="M1 1v15l3.500-3.200L7 18.500l2.500-1.100-2.400-5.400H12z" fill="#fff" stroke="#111" />
        </Mouse>
      </Page>
    </>
  );
}

export default App;
